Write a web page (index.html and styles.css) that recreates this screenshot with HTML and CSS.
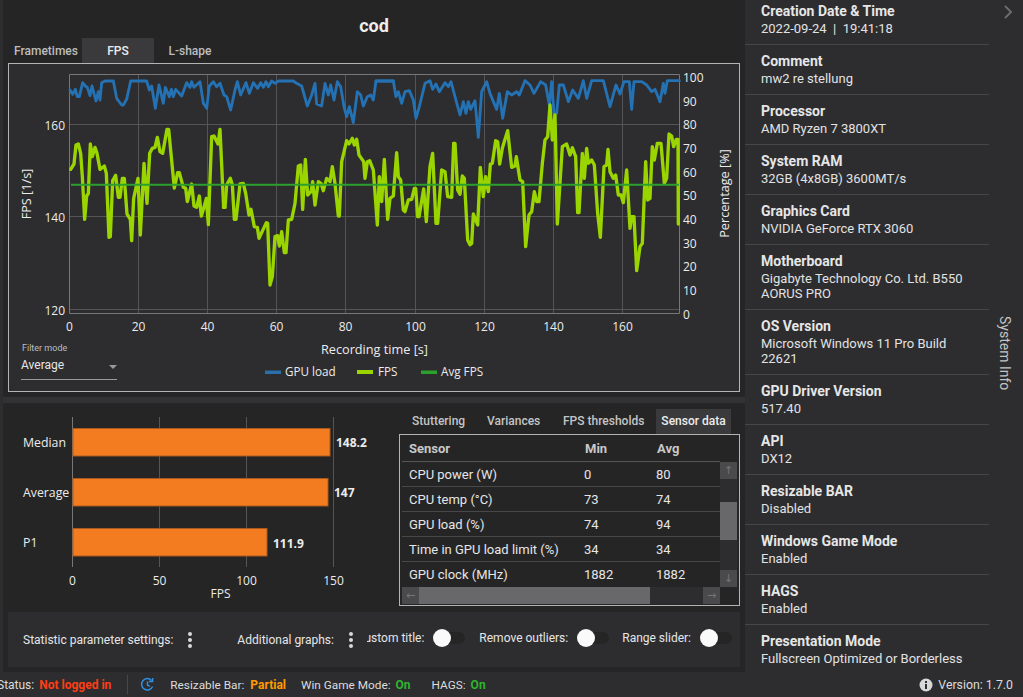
FILE: index.html
```html
<!DOCTYPE html>
<html lang="en">
<head>
<meta charset="utf-8">
<title>cod</title>
<link rel="stylesheet" href="styles.css">
</head>
<body>
<div class="app">
  <div class="main">
    <div class="left">
      <h1 class="title">cod</h1>
      <div class="tabs top-tabs">
        <span class="tab t-frame">Frametimes</span>
        <span class="tab t-fps active">FPS</span>
        <span class="tab t-l">L-shape</span>
      </div>
      <div class="chart-panel">
        <svg class="line-chart" viewBox="9 64 730 327" width="730" height="327">
          <g class="grid">
            <path d="M138.5 74V313M207.5 74V313M276.5 74V313M345.5 74V313M415.5 74V313M484.5 74V313M553.5 74V313M622.5 74V313M69 124.5H679M69 216.5H679M69 309.5H679"/>
          </g>
          <path class="frame" d="M69.5 74.5H679.5V313.5H69.5Z"/>
          <g transform="translate(0 0) scale(.33333)">
            <polyline class="s-blue" points="210,270 218,283 226,268 232,290 238,290 248,248 256,258 262,262 270,287 276,258 288,303 295,275 300,300 305,248 315,243 340,243 350,295 365,315 370,315 380,298 392,243 440,243 448,270 455,258 466,325 477,255 490,310 496,262 508,290 514,268 520,290 527,268 545,288 560,248 570,262 575,245 582,262 600,245 610,310 620,325 628,258 640,245 650,260 660,250 672,285 680,290 692,330 705,270 712,245 722,285 738,248 748,280 760,248 773,265 782,248 790,262 798,245 805,260 815,243 825,250 835,243 880,243 890,250 905,258 922,318 935,285 945,250 950,312 965,318 975,250 985,285 992,255 1002,300 1012,245 1022,260 1032,320 1040,350 1048,320 1060,368 1072,275 1082,285 1090,318 1102,290 1112,285 1120,300 1128,243 1180,243"/>
          </g>
          <g transform="translate(380 50) scale(.33333)">
            <polyline class="s-blue" points="-12,93 40,93 48,140 55,125 65,160 75,125 88,122 100,150 108,205 118,170 135,100 150,92 158,118 168,102 178,125 195,98 205,110 213,95 225,140 240,195 250,155 258,190 265,155 272,178 285,152 295,262 305,125 320,95 330,130 350,178 358,130 368,205 382,125 395,135 410,125 418,135 435,92 450,105 462,130 482,95 497,105 508,165 515,95 522,190 530,190 538,105 550,105 565,155 578,120 595,145 610,92 620,145 635,92 670,92 690,170 708,105 720,132 732,95 748,95 755,178 762,95 785,95 800,105 815,125 825,118 840,155 850,100 855,130 862,92 898,92"/>
          </g>
          <g transform="translate(65 120) scale(.33333)">
            <polyline class="s-green" points="17,148 27,132 33,75 40,72 47,100 52,170 59,298 65,228 70,220 76,72 82,110 90,82 96,100 105,148 118,138 124,160 132,352 136,350 143,182 152,166 160,232 165,232 172,175 178,175 186,282 196,298 200,362 206,235 219,175 226,345 237,130 246,250 254,100 262,85 270,82 277,52 285,95 293,100 306,28 311,28 328,204 338,158 343,158 355,202 362,205 367,245 380,192 387,258 395,262 403,228 409,288 418,258 424,235 430,314 440,50 447,48 459,72 465,28 476,262 480,262"/>
          </g>
          <g transform="translate(225 120) scale(.33333)">
            <polyline class="s-green" points="-5,262 0,262 5,195 16,175 22,195 28,298 33,298 45,192 55,190 62,220 72,285 78,268 88,320 97,322 102,355 124,308 128,310 135,495 142,470 150,350 158,347 163,378 170,335 178,398 183,398 190,300 200,298 210,250 220,138 227,135 233,268 241,118 248,225 258,215 263,185 270,255 280,185 288,190 295,212 305,175 315,185 322,140 330,190 340,288 343,288 350,125 365,62 372,72 382,55 388,75 395,58 402,105 416,125 420,175 427,125 434,122 445,150 457,315 463,170 470,245 478,118 488,298 495,235 505,228 515,98 520,170 527,180 535,270 540,275 550,240 560,238 568,205 572,205 578,290 582,290 596,207 604,305 615,140 623,100 633,310 638,310 650,150 660,155 668,230 680,232 686,70"/>
          </g>
          <g transform="translate(455 100) scale(.33333)">
            <polyline class="s-green" points="-4,130 0,130 8,270 15,283 22,228 28,235 38,420 45,434 50,430 55,342 68,375 76,202 85,290 92,230 100,275 106,192 112,190 122,122 128,125 134,192 142,145 150,118 158,92 170,202 180,198 184,170 195,240 203,245 212,440 222,345 230,335 238,275 245,305 252,305 262,190 270,120 278,110 285,15 292,120 300,45 307,372 315,250 322,140 335,132 345,165 352,143 362,170 368,338 372,338 382,160 388,235 395,145 400,190 410,180 418,195 428,340 436,412 447,200 455,195 459,148 465,215 475,235 482,225 490,285 498,285 505,308 515,210 525,385 530,350 537,350 545,512 555,440 562,430 572,185 578,300 585,295 592,140 598,180 607,130 618,130 628,250 635,235 642,102 650,108 656,140 664,118 669,118 670,372"/>
          </g>
          <line class="s-avg" x1="71" y1="184.7" x2="679" y2="184.7"/>
          <g class="ticks end">
            <text x="65" y="129.5">160</text>
            <text x="65" y="221.5">140</text>
            <text x="65" y="314.5">120</text>
          </g>
          <g class="ticks mid">
            <text x="69.5" y="331">0</text>
            <text x="138.5" y="331">20</text>
            <text x="207.5" y="331">40</text>
            <text x="276.5" y="331">60</text>
            <text x="345.5" y="331">80</text>
            <text x="415.5" y="331">100</text>
            <text x="484.5" y="331">120</text>
            <text x="553.5" y="331">140</text>
            <text x="622.5" y="331">160</text>
          </g>
          <g class="ticks">
            <text x="683" y="82">100</text>
            <text x="683" y="105.7">90</text>
            <text x="683" y="129.4">80</text>
            <text x="683" y="153">70</text>
            <text x="683" y="176.7">60</text>
            <text x="683" y="200.4">50</text>
            <text x="683" y="224">40</text>
            <text x="683" y="247.7">30</text>
            <text x="683" y="271.4">20</text>
            <text x="683" y="295">10</text>
            <text x="683" y="318.7">0</text>
          </g>
          <text class="ticks mid axis-title" transform="translate(31 194) rotate(-90)">FPS [1/s]</text>
          <text class="ticks mid axis-title" transform="translate(729 193.5) rotate(-90)">Percentage [%]</text>
          <text class="ticks mid axis-title" x="374.5" y="354">Recording time [s]</text>
          <rect x="265" y="370.5" width="16" height="3.5" fill="#2a6eaa"/>
          <text class="ticks legend" x="285" y="376">GPU load</text>
          <rect x="357" y="370" width="16" height="4" fill="#9bd500"/>
          <text class="ticks legend" x="378" y="376">FPS</text>
          <rect x="421" y="370.5" width="16" height="3.5" fill="#2ca02c"/>
          <text class="ticks legend" x="441" y="376">Avg FPS</text>
        </svg>
        <div class="filter">
          <div class="filter-label">Filter mode</div>
          <div class="filter-select"><span>Average</span><i class="caret"></i></div>
        </div>
      </div>
      <div class="splitter"></div>
      <div class="lower">
        <svg class="bar-chart" viewBox="3 403 396 209" width="396" height="209">
          <path class="grid" d="M159.5 417V567M246.5 417V567M333.5 417V567"/>
          <path class="axis0" d="M72.5 417V567"/>
          <rect class="bar" x="73" y="428.5" width="257" height="27.5"/>
          <rect class="bar" x="73" y="478.5" width="255" height="27.5"/>
          <rect class="bar" x="73" y="528.5" width="194" height="27.5"/>
          <g class="ticks cat">
            <text x="23" y="447">Median</text>
            <text x="23" y="497">Average</text>
            <text x="23" y="547">P1</text>
          </g>
          <g class="bar-val">
            <text x="336" y="447">148.2</text>
            <text x="334" y="497">147</text>
            <text x="273" y="548">111.9</text>
          </g>
          <g class="ticks mid">
            <text x="72.5" y="584.5">0</text>
            <text x="159.5" y="584.5">50</text>
            <text x="246.5" y="584.5">100</text>
            <text x="333.5" y="584.5">150</text>
            <text x="220.5" y="598">FPS</text>
          </g>
        </svg>
        <div class="stats">
          <div class="tabs sub-tabs">
            <span class="subtab s1">Stuttering</span>
            <span class="subtab s2">Variances</span>
            <span class="subtab s3">FPS thresholds</span>
            <span class="subtab s4 active">Sensor data</span>
          </div>
          <div class="table-box">
            <div class="table-head row"><span>Sensor</span><span>Min</span><span>Avg</span></div>
            <div class="table-mid">
              <div class="rows">
                <div class="row"><span>CPU power (W)</span><span>0</span><span>80</span></div>
                <div class="row"><span>CPU temp (°C)</span><span>73</span><span>74</span></div>
                <div class="row"><span>GPU load (%)</span><span>74</span><span>94</span></div>
                <div class="row"><span>Time in GPU load limit (%)</span><span>34</span><span>34</span></div>
                <div class="row last"><span>GPU clock (MHz)</span><span>1882</span><span>1882</span></div>
              </div>
              <div class="vscroll">
                <span class="sb-btn">↑</span>
                <span class="v-thumb"></span>
                <span class="sb-btn">↓</span>
              </div>
            </div>
            <div class="hscroll">
              <span class="sb-btn">←</span>
              <span class="h-thumb"></span>
              <span class="sb-btn">→</span>
            </div>
          </div>
        </div>
      </div>
      <div class="settings">
        <div class="set-left">
          <span class="set-item">Statistic parameter settings:</span>
          <svg class="dots d1" width="6" height="16" viewBox="0 0 6 16"><circle cx="3" cy="2" r="2"/><circle cx="3" cy="8" r="2"/><circle cx="3" cy="14" r="2"/></svg>
          <span class="set-item i2">Additional graphs:</span>
          <svg class="dots d2" width="6" height="16" viewBox="0 0 6 16"><circle cx="3" cy="2" r="2"/><circle cx="3" cy="8" r="2"/><circle cx="3" cy="14" r="2"/></svg>
        </div>
        <div class="set-right">
          <span class="set-item">Custom title:</span><span class="toggle"></span>
          <span class="set-item g1">Remove outliers:</span><span class="toggle"></span>
          <span class="set-item g2">Range slider:</span><span class="toggle"></span>
        </div>
      </div>
    </div>
    <div class="right">
      <div class="info-list">
        <div class="info"><b>Creation Date &amp; Time</b><span>2022-09-24&nbsp; | &nbsp;19:41:18</span></div>
        <div class="info"><b>Comment</b><span>mw2 re stellung</span></div>
        <div class="info"><b>Processor</b><span>AMD Ryzen 7 3800XT</span></div>
        <div class="info"><b>System RAM</b><span>32GB (4x8GB) 3600MT/s</span></div>
        <div class="info"><b>Graphics Card</b><span>NVIDIA GeForce RTX 3060</span></div>
        <div class="info"><b>Motherboard</b><span>Gigabyte Technology Co. Ltd. B550 AORUS PRO</span></div>
        <div class="info"><b>OS Version</b><span>Microsoft Windows 11 Pro Build 22621</span></div>
        <div class="info"><b>GPU Driver Version</b><span>517.40</span></div>
        <div class="info"><b>API</b><span>DX12</span></div>
        <div class="info"><b>Resizable BAR</b><span>Disabled</span></div>
        <div class="info"><b>Windows Game Mode</b><span>Enabled</span></div>
        <div class="info"><b>HAGS</b><span>Enabled</span></div>
        <div class="info last"><b>Presentation Mode</b><span>Fullscreen Optimized or Borderless</span></div>
      </div>
      <div class="side">
        <svg class="chev" width="8" height="14" viewBox="0 0 8 14"><polyline points="1,1 7,7 1,13"/></svg>
        <span class="side-label">System Info</span>
      </div>
    </div>
  </div>
  <div class="status">
    <span>Status:</span><b class="red">Not logged in</b>
    <span class="sep"></span>
    <svg class="refresh" width="15" height="15" viewBox="0 0 15 15"><path d="M12.6 9.5A5.7 5.7 0 1 1 11.5 3.4"/><path d="M12.6 1v3.6H9"/><path d="M7.5 4.5v3.5l2.2 1.3"/></svg>
    <span class="st">Resizable Bar:</span><b class="orange">Partial</b>
    <span class="st">Win Game Mode:</span><b class="green">On</b>
    <span class="st h">HAGS:</span><b class="green">On</b>
    <span class="version">
      <svg width="14" height="14" viewBox="0 0 14 14"><circle cx="7" cy="7" r="6.5" fill="#d8d8d8"/><rect x="6" y="6" width="2" height="5" fill="#2d2d30"/><rect x="6" y="3" width="2" height="2" fill="#2d2d30"/></svg>
      <span>Version: 1.7.0</span>
    </span>
  </div>
</div>
</body>
</html>
```
FILE: styles.css
```css
* { box-sizing: border-box; }
html, body { margin: 0; padding: 0; height: 100%; overflow: hidden; }
body {
  background: #2d2d30;
  color: #e6e6e6;
  font-family: Roboto, "Liberation Sans", sans-serif;
  font-size: 12px;
}
.app { width: 1023px; height: 697px; display: flex; flex-direction: column; overflow: hidden; }
.main { display: flex; height: 672px; }

.left {
  width: 742px;
  margin-left: 3px;
  background: #252526;
  display: flex;
  flex-direction: column;
  flex: none;
}
.title {
  margin: 0;
  height: 38px;
  text-align: center;
  font-size: 18px;
  font-weight: 700;
  line-height: 52px;
  color: #eee;
}
.tabs { display: flex; }
.top-tabs { height: 25px; margin-left: 11px; align-items: stretch; }
.tab {
  font-weight: 500;
  line-height: 26px;
  color: #bdbdbd;
  text-align: center;
}
.tab.active { background: #3a3a3c; color: #ececec; }
.t-frame { width: 68px; text-align: left; }
.t-fps { width: 72px; }
.t-l { width: 72px; }

.chart-panel {
  position: relative;
  margin-left: 5px;
  width: 732px;
  height: 329px;
  border: 1px solid #b4b4b4;
  background: #2d2d30;
}
.line-chart { display: block; }
.grid { fill: none; stroke: #555558; stroke-width: 1; }
.frame { fill: none; stroke: #77777a; stroke-width: 1; }
.s-blue { fill: none; stroke: #2472b4; stroke-width: 8.5; stroke-linejoin: round; stroke-linecap: round; }
.s-green { fill: none; stroke: #9bd500; stroke-width: 10; stroke-linejoin: round; stroke-linecap: round; }
.s-avg { stroke: #2ca02c; stroke-width: 2; }
.ticks, .ticks text {
  font-family: "Open Sans", "Noto Sans", sans-serif;
  font-size: 12px;
  fill: #ececec;
}
.ticks.axis-title { font-size: 12.7px; }
.ticks.legend { font-size: 11.7px; }
.ticks.cat text { font-size: 12.3px; }
.mid, .mid text { text-anchor: middle; }
.end, .end text { text-anchor: end; }

.filter { position: absolute; left: 12px; top: 278px; width: 96px; }
.filter-label { font-size: 9px; color: #bdbdbd; line-height: 12px; padding-left: 1px; }
.filter-select {
  display: flex;
  align-items: center;
  justify-content: space-between;
  height: 26px;
  padding-bottom: 4px;
  border-bottom: 1px solid #9a9a9a;
  font-size: 12px;
  color: #e6e6e6;
}
.caret {
  width: 0;
  height: 0;
  margin-top: 4px;
  border-left: 4px solid transparent;
  border-right: 4px solid transparent;
  border-top: 4px solid #9a9a9a;
}

.splitter { height: 6px; margin-top: 5px; background: #323234; }
.lower { display: flex; height: 209px; }
.bar-chart { display: block; flex: none; }
.axis0 { stroke: #77777a; fill: none; }
.bar { fill: #f47c20; stroke: #a85a1e; stroke-width: 1; }
.bar-val text {
  font-family: "Open Sans", "Noto Sans", sans-serif;
  font-size: 12px;
  font-weight: 700;
  fill: #ececec;
}

.stats { display: flex; flex-direction: column; width: 341px; }
.sub-tabs { height: 31px; padding-top: 6px; align-items: stretch; }
.subtab { font-weight: 500; line-height: 25px; color: #c4c4c4; white-space: nowrap; }
.s1 { margin-left: 13px; width: 75px; }
.s2 { width: 76px; }
.s3 { width: 93px; }
.s4 { width: 75px; text-align: center; }
.subtab.active { background: #3a3a3c; color: #ececec; }

.table-box {
  width: 341px;
  height: 172px;
  border: 1px solid #b4b4b4;
  padding: 1px 2px;
  display: flex;
  flex-direction: column;
  font-size: 13px;
}
.row {
  display: grid;
  grid-template-columns: 175px 72px 1fr;
  align-items: center;
  padding-left: 7px;
  height: 25px;
  border-bottom: 1px solid #48484a;
}
.table-head {
  height: 26px;
  font-weight: 700;
  color: #c8c8c8;
  width: 318px;
  border-bottom: 1px solid #555558;
}
.table-head span:nth-child(n+2) { padding-left: 1px; }
.table-mid { display: flex; height: 125px; }
.rows { width: 318px; }
.row.last { border-bottom: 0; }
.vscroll { width: 17px; display: flex; flex-direction: column; background: #2d2d30; }
.sb-btn {
  flex: none;
  width: 17px;
  height: 17px;
  background: #4a4a4c;
  color: #757577;
  font-size: 11px;
  line-height: 17px;
  text-align: center;
  font-family: "DejaVu Sans", sans-serif;
}
.v-thumb { display: block; height: 38px; margin: 23px 0 30px; background: #68686a; }
.hscroll { display: flex; width: 318px; height: 17px; background: #2d2d30; }
.h-thumb { display: block; width: 231px; margin-right: 53px; background: #68686a; }

.settings {
  margin: 0 5px 5px;
  flex: none;
  height: 55px;
  background: #2d2d30;
  display: flex;
  justify-content: space-between;
  width: 732px;
}
.set-left { display: flex; align-items: center; padding-left: 15px; height: 55px; padding-top: 1px; }
.set-item { white-space: nowrap; color: #e6e6e6; }
.dots { fill: #d8d8d8; flex: none; }
.d1 { margin-left: 14px; }
.i2 { margin-left: 44px; }
.d2 { margin-left: 14px; }
.set-right {
  width: 373px;
  overflow: hidden;
  display: flex;
  align-items: center;
  justify-content: flex-end;
  padding-right: 8px;
  height: 51px;
}
.g1 { margin-left: 14px; }
.g2 { margin-left: 13px; }
.toggle {
  position: relative;
  flex: none;
  width: 32px;
  height: 12px;
  margin-left: 9px;
  border-radius: 6px;
  background: #252526;
}
.toggle::before {
  content: "";
  position: absolute;
  left: 0;
  top: -3px;
  width: 18px;
  height: 18px;
  border-radius: 50%;
  background: #fafafa;
}

.right { width: 278px; display: flex; flex: none; overflow: hidden; }
.info-list { width: 244px; flex: none; }
.info {
  display: flex;
  flex-direction: column;
  padding: 8px 16px 8px;
  min-height: 50px;
  border-bottom: 1px solid #464649;
}
.info:first-child { min-height: 45px; padding-top: 3px; }
.info.last { border-bottom: 0; }
.info b { font-size: 14px; font-weight: 700; line-height: 17px; color: #e6e6e6; }
.info span { font-size: 13px; line-height: 15px; margin-top: 1px; color: #e2e2e2; }
.side { flex: 1; position: relative; }
.chev { position: absolute; left: 15px; top: 5px; fill: none; stroke: #6a6a6c; stroke-width: 2; }
.side-label {
  position: absolute;
  left: 8px;
  top: 316px;
  writing-mode: vertical-rl;
  font-size: 14px;
  color: #c4c4c4;
  white-space: nowrap;
}

.status {
  height: 25px;
  display: flex;
  align-items: center;
  margin-left: -3px;
  white-space: nowrap;
  color: #dcdcdc;
}
.status b { font-weight: 700; margin-left: 5px; }
.status b.orange { margin-left: 6px; }
.red { color: #ff3d14; }
.orange { color: #ff9a00; }
.green { color: #2cb52c; }
.sep { width: 1px; height: 19px; margin-left: 16px; background: #48484a; }
.refresh { margin-left: 12px; fill: none; stroke: #2f8fe0; stroke-width: 1.5; flex: none; }
.st { margin-left: 15px; font-size: 11.8px; }
.h { margin-left: 21px; }
.version { margin-left: auto; display: flex; align-items: center; gap: 5px; padding-right: 10px; font-size: 12.3px; }
```
